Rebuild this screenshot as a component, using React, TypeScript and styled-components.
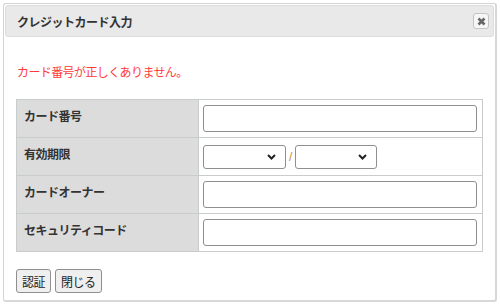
import styled, { createGlobalStyle } from 'styled-components';

const GlobalStyle = createGlobalStyle`
  html, body {
    margin: 0;
    padding: 0;
    background: #ffffff;
  }
  body {
    font-family: "Noto Sans CJK JP", "Liberation Sans", sans-serif;
    color: #333333;
  }
`;

const Page = styled.div`
  width: 500px;
  height: 304px;
  overflow: hidden;
  padding: 3px 0 0 3px;
  box-sizing: border-box;
`;

const Dialog = styled.div`
  width: 494px;
  height: 299px;
  box-sizing: border-box;
  border: 1px solid #d4d4d4;
  border-right: 2px solid #d8d8d8;
  border-bottom: 2px solid #d8d8d8;
  border-radius: 3px;
  padding: 1px;
  background: #fff;
  display: flex;
  flex-direction: column;
`;

const TitleBar = styled.div`
  height: 32px;
  box-sizing: border-box;
  background: #e9e9e9;
  border: 1px solid #dddddd;
  border-radius: 3px;
  display: flex;
  align-items: center;
  justify-content: space-between;
  padding: 0 4px 0 11px;
`;

const Title = styled.span`
  font-size: 12px;
  font-weight: bold;
  color: #333;
  letter-spacing: -0.5px;
`;

const CloseButton = styled.button`
  width: 16px;
  height: 16px;
  padding: 0;
  border: 1px solid #c5c5c5;
  border-radius: 3px;
  background: #f6f6f6;
  display: flex;
  align-items: center;
  justify-content: center;
  cursor: pointer;
`;

const Content = styled.div`
  padding: 26px 11px 0 11px;
`;

const ErrorText = styled.p`
  margin: 0 0 18px 1px;
  color: #ff3b3b;
  font-size: 12px;
  line-height: 18px;
  letter-spacing: -0.6px;
`;

const FormTable = styled.table`
  width: 467px;
  border-collapse: collapse;
  border: 1px solid #cfd3d3;
  font-size: 12px;
`;

const Row = styled.tr`
  height: 38px;
`;

const Label = styled.th`
  width: 167px;
  background: #dcdcdc;
  border: 1px solid #c9cccc;
  text-align: left;
  vertical-align: top;
  padding: 8px 7px 0 7px;
  font-weight: bold;
  font-size: 12px;
  line-height: 15px;
  color: #333;
  letter-spacing: -0.5px;
`;

const Cell = styled.td`
  border: 1px solid #c9cccc;
  padding: 0 5px 0 4px;
  vertical-align: middle;
  background: #fff;
`;

const TextInput = styled.input`
  display: block;
  width: 274px;
  height: 27px;
  box-sizing: border-box;
  border: 1px solid #8f8f8f;
  border-radius: 3px;
  background: #fff;
`;

const SelectGroup = styled.div`
  display: flex;
  align-items: center;
  gap: 3px;
`;

const Select = styled.select<{ $w: number }>`
  width: ${(p) => p.$w}px;
  height: 24px;
  box-sizing: border-box;
  border: 1px solid #8f8f8f;
  border-radius: 3px;
  background: #fff;
  appearance: none;
  padding: 0;
  background-image: url("data:image/svg+xml;utf8,<svg xmlns='http://www.w3.org/2000/svg' width='9' height='6'><path d='M1 1 L4.5 4.5 L8 1' stroke='%23222' stroke-width='2' fill='none'/></svg>");
  background-repeat: no-repeat;
  background-position: right 9px center;
`;

const Slash = styled.span`
  color: #c08a40;
  font-size: 12px;
  font-family: "Liberation Sans", sans-serif;
`;

const ButtonBar = styled.div`
  display: flex;
  gap: 4px;
  margin-top: 17px;
`;

const Button = styled.button`
  height: 24px;
  padding: 0 5px;
  box-sizing: border-box;
  border: 1px solid #8f8f8f;
  border-radius: 3px;
  background: #efefef;
  font-family: "Noto Sans CJK JP", "Liberation Sans", sans-serif;
  font-size: 12px;
  color: #222;
  letter-spacing: -0.5px;
`;

export default function App() {
  return (
    <>
      <GlobalStyle />
      <Page>
        <Dialog>
          <TitleBar>
            <Title>クレジットカード入力</Title>
            <CloseButton aria-label="close">
              <svg width="9" height="9" viewBox="0 0 9 9">
                <path d="M1.5 1.5 L7.5 7.5 M7.5 1.5 L1.5 7.5" stroke="#666" strokeWidth="2.6" />
              </svg>
            </CloseButton>
          </TitleBar>
          <Content>
            <ErrorText>カード番号が正しくありません。</ErrorText>
            <FormTable>
              <tbody>
                <Row>
                  <Label>カード番号</Label>
                  <Cell><TextInput /></Cell>
                </Row>
                <Row>
                  <Label>有効期限</Label>
                  <Cell>
                    <SelectGroup>
                      <Select $w={83}><option></option></Select>
                      <Slash>/</Slash>
                      <Select $w={82}><option></option></Select>
                    </SelectGroup>
                  </Cell>
                </Row>
                <Row>
                  <Label>カードオーナー</Label>
                  <Cell><TextInput /></Cell>
                </Row>
                <Row>
                  <Label>セキュリティコード</Label>
                  <Cell><TextInput /></Cell>
                </Row>
              </tbody>
            </FormTable>
            <ButtonBar>
              <Button>認証</Button>
              <Button>閉じる</Button>
            </ButtonBar>
          </Content>
        </Dialog>
      </Page>
    </>
  );
}
